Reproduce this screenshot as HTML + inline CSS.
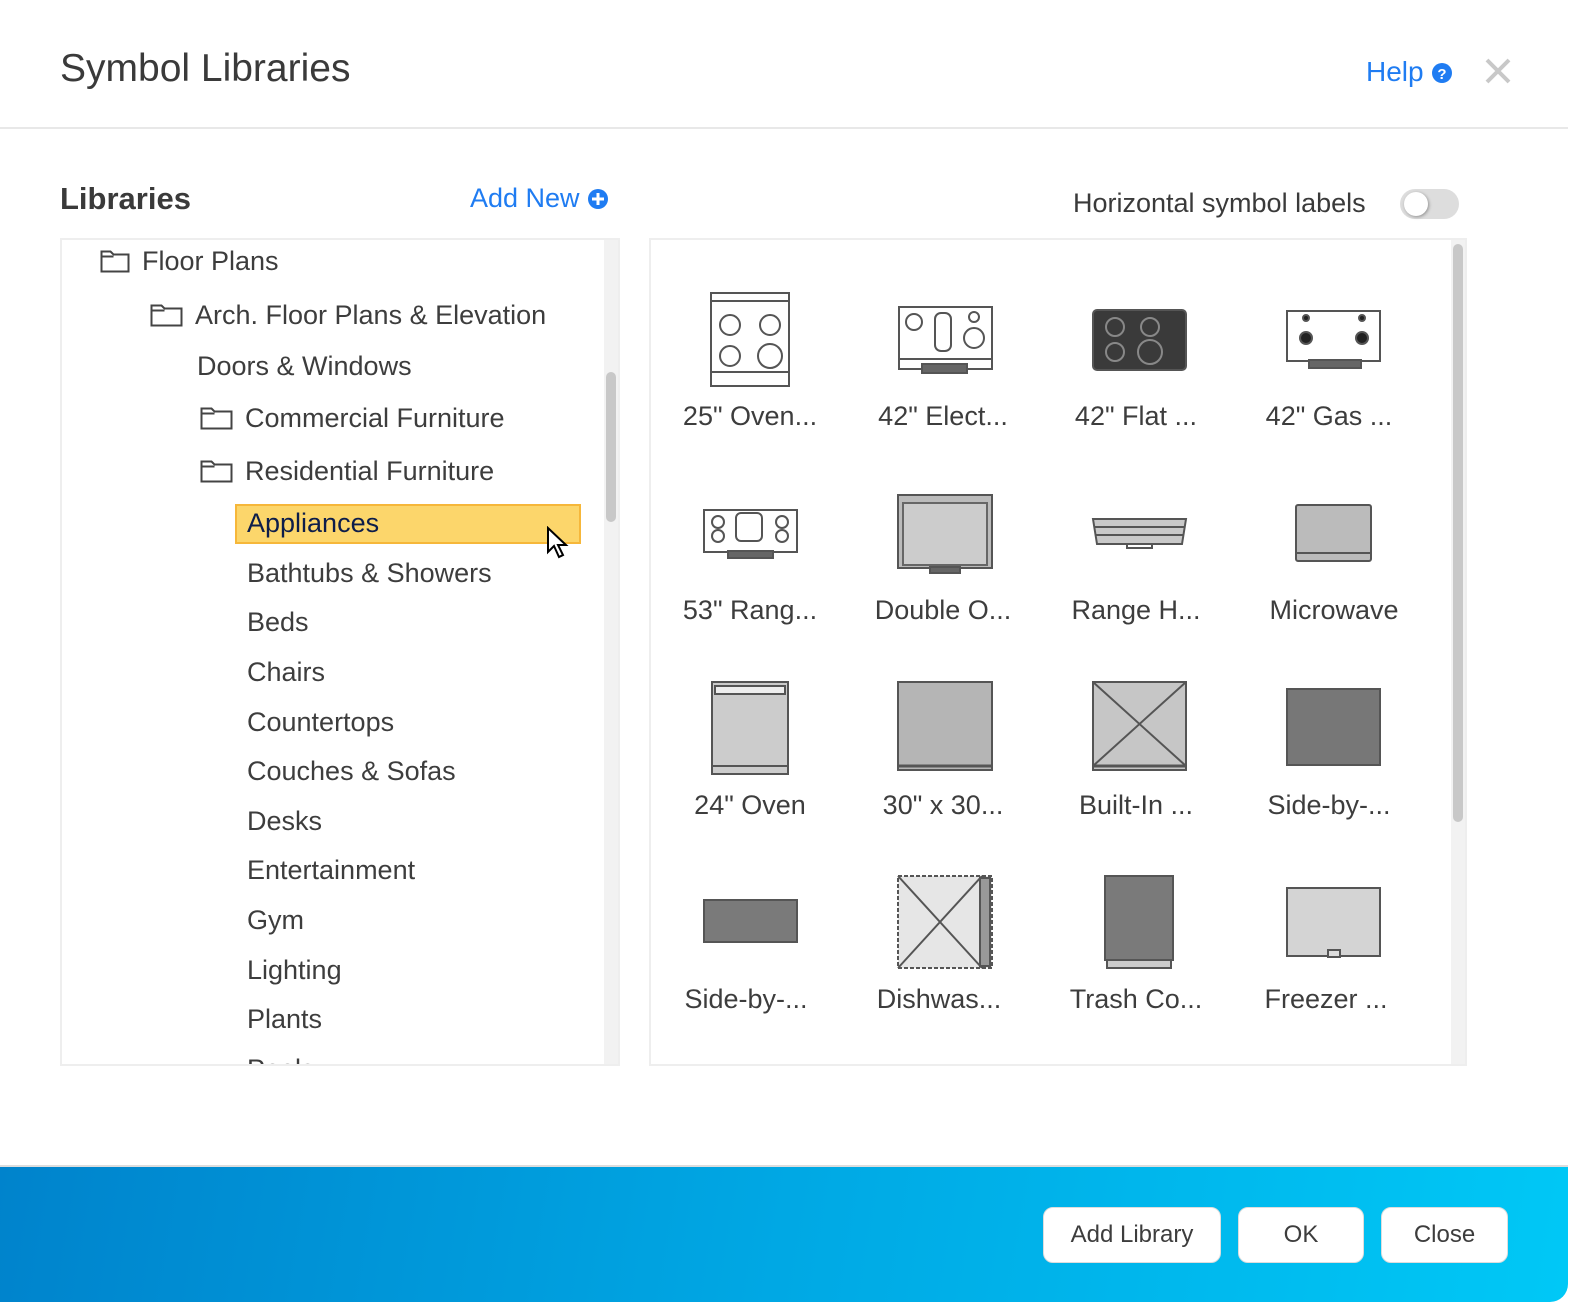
<!DOCTYPE html>
<html><head><meta charset="utf-8"><style>
*{box-sizing:border-box;margin:0;padding:0}
body{width:1580px;height:1312px;background:#fff;font-family:"Liberation Sans",sans-serif;color:#3d3d3d;position:relative;overflow:hidden}
.dlg{position:absolute;left:0;top:0;width:1568px;height:1302px;border-radius:0 0 18px 0;overflow:hidden;background:#fff}
.abs{position:absolute;white-space:nowrap}
.title{left:60px;top:47px;font-size:39px;color:#3a3a3a}
.hr{left:0;top:127px;width:1568px;height:2px;background:#e8e8e8}
.help{left:1366px;top:56px;font-size:28px;color:#1f7cf2}
.libs{left:60px;top:181px;font-size:31px;font-weight:bold;color:#3a3a3a}
.addnew{left:470px;top:183px;font-size:27px;color:#1f7cf2}
.hsl{left:1073px;top:188px;font-size:27px;color:#3a3a3a}
.tog{left:1400px;top:189px;width:59px;height:30px;border-radius:15px;background:#ddd}
.tog i{position:absolute;left:4px;top:3px;width:24px;height:24px;border-radius:50%;background:#fff;box-shadow:1px 1px 3px rgba(0,0,0,.35)}
.lp{left:60px;top:238px;width:560px;height:828px;border:2px solid #eee;overflow:hidden}
.rp{left:649px;top:238px;width:818px;height:828px;border:2px solid #eee;overflow:hidden}
.sb{position:absolute;background:#f2f2f2;width:14px;top:0;bottom:0}
.th{position:absolute;background:#c8c8c8;width:10px;border-radius:5px;left:2px}
.it{position:absolute;font-size:27px;color:#3d3d3d;white-space:nowrap}
.fold{display:inline-block;vertical-align:-3px;margin-right:12px}
.sel{position:absolute;left:173px;top:264px;width:346px;height:40px;background:#fcd66b;border:2px solid #f6b73a}
.lab{position:absolute;font-size:27px;color:#3d3d3d;width:190px;text-align:center;white-space:nowrap}
.foot{left:0;top:1165px;width:1568px;height:137px;background:linear-gradient(100deg,#0083cc 0%,#00a8e4 50%,#00c8f6 100%);border-top:2px solid #ddd}
.btn{position:absolute;top:1207px;height:56px;background:#fff;border-radius:10px;border:1px solid #ddd;font-size:24px;color:#3d3d3d;text-align:center;line-height:54px}
</style></head><body><div class="dlg">
<div class="abs title">Symbol Libraries</div>
<div class="abs help">Help <svg width="22" height="22" viewBox="0 0 22 22" style="vertical-align:-3px"><circle cx="11" cy="11" r="10" fill="#1f7cf2"/><text x="11" y="17" font-size="15" font-weight="bold" fill="#fff" text-anchor="middle" font-family="Liberation Sans">?</text></svg></div>
<svg class="abs" style="left:1485px;top:58px" width="26" height="26" viewBox="0 0 26 26"><path d="M2 2L24 24M24 2L2 24" stroke="#c8c8c8" stroke-width="4"/></svg>
<div class="abs hr"></div>
<div class="abs libs">Libraries</div>
<div class="abs addnew">Add New <svg width="22" height="22" viewBox="0 0 22 22" style="vertical-align:-3px"><circle cx="11" cy="11" r="10" fill="#1f7cf2"/><path d="M11 5v12M5 11h12" stroke="#fff" stroke-width="3"/></svg></div>
<div class="abs hsl">Horizontal symbol labels</div>
<div class="abs tog"><i></i></div>

<div class="abs lp">
<div class="it" style="left:38px;top:6px"><svg class="fold" width="30" height="24" viewBox="0 0 30 24"><path d="M1.5 22.5V2.5h9l3 3h15v17z M1.5 7.5h12" fill="none" stroke="#444" stroke-width="2"/></svg>Floor Plans</div>
<div class="it" style="left:88px;top:60px"><svg class="fold" width="33" height="24" viewBox="0 0 33 24"><path d="M1.5 22.5V2.5h10l3 3h17v17z M1.5 7.5h13" fill="none" stroke="#444" stroke-width="2"/></svg>Arch. Floor Plans &amp; Elevation</div>
<div class="it" style="left:135px;top:111px">Doors &amp; Windows</div>
<div class="it" style="left:138px;top:163px"><svg class="fold" width="33" height="24" viewBox="0 0 33 24"><path d="M1.5 22.5V2.5h10l3 3h17v17z M1.5 7.5h13" fill="none" stroke="#444" stroke-width="2"/></svg>Commercial Furniture</div>
<div class="it" style="left:138px;top:216px"><svg class="fold" width="33" height="24" viewBox="0 0 33 24"><path d="M1.5 22.5V2.5h10l3 3h17v17z M1.5 7.5h13" fill="none" stroke="#444" stroke-width="2"/></svg>Residential Furniture</div>
<div class="sel"></div>
<div class="it" style="left:185px;top:268px;color:#0d1d4a">Appliances</div>
<svg style="position:absolute;left:484px;top:286px" width="26" height="34" viewBox="0 0 26 34"><path d="M2 2v24l6-6 5 11 4-2-5-10h8z" fill="#fff" stroke="#000" stroke-width="2"/></svg>
<div class="it" style="left:185px;top:318px">Bathtubs &amp; Showers</div>
<div class="it" style="left:185px;top:367px">Beds</div>
<div class="it" style="left:185px;top:417px">Chairs</div>
<div class="it" style="left:185px;top:467px">Countertops</div>
<div class="it" style="left:185px;top:516px">Couches &amp; Sofas</div>
<div class="it" style="left:185px;top:566px">Desks</div>
<div class="it" style="left:185px;top:615px">Entertainment</div>
<div class="it" style="left:185px;top:665px">Gym</div>
<div class="it" style="left:185px;top:715px">Lighting</div>
<div class="it" style="left:185px;top:764px">Plants</div>
<div class="it" style="left:185px;top:814px">Pools</div>
<div class="sb" style="left:542px"><div class="th" style="top:132px;height:150px"></div></div>
</div>

<div class="abs rp">
<svg style="position:absolute;left:0;top:0" width="800" height="828" viewBox="649 238 800 828" fill="none" stroke="#555" stroke-width="2">
<rect x="709" y="291" width="78" height="93" fill="#fff"/><line x1="709" y1="299" x2="787" y2="299"/><line x1="709" y1="370" x2="787" y2="370"/>
<circle cx="728" cy="323" r="10"/><circle cx="768" cy="323" r="10"/><circle cx="728" cy="354" r="10"/><circle cx="768" cy="354" r="12"/>
<rect x="897" y="305" width="93" height="62"/><rect x="933" y="311" width="16" height="38" rx="6"/><circle cx="912" cy="320" r="8"/><circle cx="972" cy="315" r="5"/><circle cx="972" cy="336" r="10"/><line x1="897" y1="357" x2="990" y2="357"/><rect x="920" y="362" width="45" height="9" fill="#666"/>
<rect x="1091" y="308" width="93" height="60" rx="4" fill="#3a3a3a"/><circle cx="1113" cy="325" r="9" stroke="#888"/><circle cx="1148" cy="325" r="9" stroke="#888"/><circle cx="1113" cy="350" r="9" stroke="#888"/><circle cx="1148" cy="350" r="12" stroke="#888"/>
<rect x="1285" y="309" width="93" height="50"/><circle cx="1304" cy="336" r="6" fill="#222"/><circle cx="1360" cy="336" r="6" fill="#222"/><circle cx="1304" cy="316" r="3" fill="#222"/><circle cx="1360" cy="316" r="3" fill="#222"/><rect x="1307" y="358" width="52" height="8" fill="#666"/>
<rect x="702" y="508" width="93" height="42"/><rect x="734" y="511" width="26" height="28" rx="5"/><circle cx="716" cy="520" r="6"/><circle cx="716" cy="534" r="6"/><circle cx="780" cy="520" r="6"/><circle cx="780" cy="534" r="6"/><rect x="726" y="549" width="45" height="7" fill="#666"/>
<rect x="896" y="493" width="94" height="73" fill="#bbb"/><rect x="901" y="501" width="84" height="62" fill="#ccc" stroke="#666"/><rect x="928" y="565" width="30" height="6" fill="#666"/>
<path d="M1091 517h93l-4 25h-85z" fill="#c9c9c9"/><line x1="1093" y1="525" x2="1182" y2="525"/><line x1="1094" y1="533" x2="1181" y2="533"/><rect x="1125" y="542" width="25" height="4"/>
<rect x="1294" y="503" width="75" height="56" rx="2" fill="#bbb"/><line x1="1294" y1="551" x2="1369" y2="551"/>
<rect x="710" y="680" width="76" height="92" fill="#ccc"/><rect x="713" y="684" width="70" height="8" fill="#eee"/><line x1="710" y1="764" x2="786" y2="764"/>
<rect x="896" y="680" width="94" height="88" fill="#b5b5b5"/><line x1="896" y1="764" x2="990" y2="764" stroke-width="3"/>
<rect x="1091" y="680" width="93" height="88" fill="#c6c6c6"/><path d="M1091 680L1184 764M1184 680L1091 764"/><line x1="1091" y1="764" x2="1184" y2="764" stroke-width="3"/>
<rect x="1285" y="687" width="93" height="76" fill="#777"/>
<rect x="702" y="898" width="93" height="42" fill="#7a7a7a"/>
<rect x="896" y="874" width="94" height="92" fill="#e6e6e6" stroke-dasharray="4 2"/><path d="M896 874L980 966M980 874L896 966"/><rect x="978" y="876" width="10" height="88" fill="#999"/>
<rect x="1103" y="874" width="68" height="84" fill="#7a7a7a"/><rect x="1105" y="958" width="64" height="8" fill="#ccc"/>
<rect x="1285" y="886" width="93" height="68" fill="#d4d4d4"/><rect x="1326" y="948" width="12" height="7" fill="#ddd"/>
</svg>
<div class="lab" style="left:4px;top:161px">25" Oven...</div>
<div class="lab" style="left:197px;top:161px">42" Elect...</div>
<div class="lab" style="left:390px;top:161px">42" Flat ...</div>
<div class="lab" style="left:583px;top:161px">42" Gas ...</div>
<div class="lab" style="left:4px;top:355px">53" Rang...</div>
<div class="lab" style="left:197px;top:355px">Double O...</div>
<div class="lab" style="left:390px;top:355px">Range H...</div>
<div class="lab" style="left:588px;top:355px">Microwave</div>
<div class="lab" style="left:4px;top:550px">24" Oven</div>
<div class="lab" style="left:197px;top:550px">30" x 30...</div>
<div class="lab" style="left:390px;top:550px">Built-In ...</div>
<div class="lab" style="left:583px;top:550px">Side-by-...</div>
<div class="lab" style="left:0px;top:744px">Side-by-...</div>
<div class="lab" style="left:193px;top:744px">Dishwas...</div>
<div class="lab" style="left:390px;top:744px">Trash Co...</div>
<div class="lab" style="left:580px;top:744px">Freezer ...</div>
<div class="sb" style="left:800px"><div class="th" style="top:4px;height:578px"></div></div>
</div>

<div class="abs foot"></div>
<div class="btn" style="left:1043px;width:178px">Add Library</div>
<div class="btn" style="left:1238px;width:126px">OK</div>
<div class="btn" style="left:1381px;width:127px">Close</div>
</div></body></html>
